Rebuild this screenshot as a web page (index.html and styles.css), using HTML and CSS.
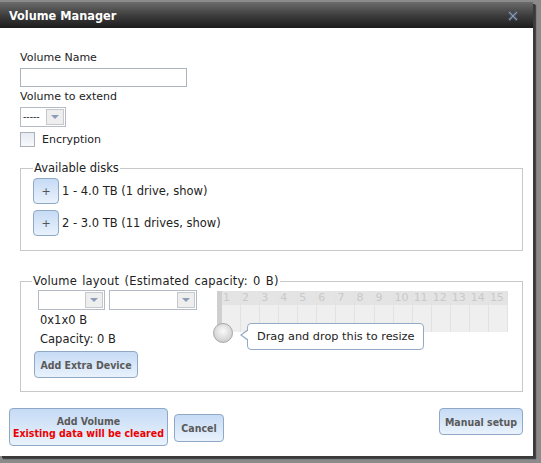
FILE: index.html
```html
<!DOCTYPE html>
<html>
<head>
<meta charset="utf-8">
<link rel="stylesheet" href="styles.css">
</head>
<body>
<div class="dialog">
  <div class="titlebar">
    <span class="title">Volume Manager</span>
    <svg class="close" width="10" height="10" viewBox="0 0 10 10"><path d="M1 1 L9 9 M9 1 L1 9" stroke="#56657a" stroke-width="2.6"/><path d="M1 1 L9 9 M9 1 L1 9" stroke="#8a9ab0" stroke-width="1"/></svg>
  </div>
  <div class="content">
    <div class="label l-name">Volume Name</div>
    <div class="textinput"></div>
    <div class="label l-extend">Volume to extend</div>
    <div class="select small"><span class="val">-----</span><span class="arrowbox"><span class="arrow"></span></span></div>
    <div class="checkrow"><span class="checkbox"></span><span class="label">Encryption</span></div>

    <fieldset class="fs disks">
      <legend>Available disks</legend>
      <div class="diskrow"><span class="btn plus">+</span><span>1 - 4.0 TB (1 drive, show)</span></div>
      <div class="diskrow"><span class="btn plus">+</span><span>2 - 3.0 TB (11 drives, show)</span></div>
    </fieldset>

    <fieldset class="fs layout">
      <legend>Volume layout (Estimated capacity: 0 B)</legend>
      <div class="layoutrow">
        <div class="leftcol">
          <div class="selects">
            <div class="select s1"><span class="val"></span><span class="arrowbox"><span class="arrow"></span></span></div>
            <div class="select s2"><span class="val"></span><span class="arrowbox"><span class="arrow"></span></span></div>
          </div>
          <div class="info i1">0x1x0 B</div>
          <div class="info i2">Capacity: 0 B</div>
          <span class="btn extra">Add Extra Device</span>
        </div>
        <div class="gridwrap">
          <div class="grid">
            <div class="col first"><span>1</span></div>
            <div class="col"><span>2</span></div>
            <div class="col"><span>3</span></div>
            <div class="col"><span>4</span></div>
            <div class="col"><span>5</span></div>
            <div class="col"><span>6</span></div>
            <div class="col"><span>7</span></div>
            <div class="col"><span>8</span></div>
            <div class="col"><span>9</span></div>
            <div class="col"><span>10</span></div>
            <div class="col"><span>11</span></div>
            <div class="col"><span>12</span></div>
            <div class="col"><span>13</span></div>
            <div class="col"><span>14</span></div>
            <div class="col"><span>15</span></div>
          </div>
          <div class="handle"></div>
          <div class="tip">Drag and drop this to resize</div>
        </div>
      </div>
    </fieldset>

    <div class="actions">
      <span class="btn addvol"><span class="b1">Add Volume</span><span class="warn">Existing data will be cleared</span></span>
      <span class="btn cancel">Cancel</span>
      <span class="spacer"></span>
      <span class="btn manual">Manual setup</span>
    </div>
  </div>
</div>
</body>
</html>
```
FILE: styles.css
```css
html, body {
  margin: 0;
  padding: 0;
  background: #8b8b8b;
  width: 541px;
  height: 463px;
  overflow: hidden;
}
body {
  font-family: "DejaVu Sans", Verdana, sans-serif;
  font-size: 11px;
  color: #222;
}
.dialog {
  margin-top: 2px;
  width: 533px;
  height: 454px;
  background: #fff;
  box-shadow: 2px 2px 0 #3a3a3a, 3px 3px 1px #444;
  display: flex;
  flex-direction: column;
}
.titlebar {
  height: 26px;
  background: linear-gradient(#6b6b6b, #3a3a3a 55%, #1c1c1c);
  display: flex;
  align-items: center;
  padding: 0 15px 0 9px;
  justify-content: space-between;
}
.title {
  color: #fff;
  font-family: "DejaVu Sans Condensed", "DejaVu Sans", sans-serif;
  font-weight: bold;
  font-size: 12.6px;
}
.close { margin-top: 1px; }
.content {
  padding: 0 10px 0 20px;
  display: flex;
  flex-direction: column;
  flex: 1;
}
.label { line-height: 14px; }
.l-name { margin-top: 23px; }
.textinput {
  margin-top: 3px;
  width: 165px;
  height: 17px;
  border: 1px solid #abb3bd;
}
.l-extend { margin-top: 3px; }
.select {
  margin-top: 3px;
  display: flex;
  height: 18px;
  border: 1px solid #b4bbc4;
  box-sizing: content-box;
}
.select.small { width: 44px; margin-top: 3px; }
.select .val {
  flex: 1;
  font-family: "Liberation Sans", sans-serif;
  font-size: 10px;
  line-height: 18px;
  padding-left: 2px;
  color: #333;
  letter-spacing: 0;
}
.arrowbox {
  width: 16px;
  margin: 1px;
  border: 1px solid #c5c9ce;
  background: #eeeeee;
  display: flex;
  align-items: center;
  justify-content: center;
}
.arrow {
  width: 0; height: 0;
  border-left: 4px solid transparent;
  border-right: 4px solid transparent;
  border-top: 4px solid #8c9cb6;
}
.checkrow {
  margin-top: 5px;
  display: flex;
  align-items: center;
  gap: 7px;
}
.checkbox {
  width: 13px;
  height: 13px;
  border: 1px solid #aab1ba;
  background: linear-gradient(#e6ebf2, #f7f9fb);
}
.fs {
  margin: 0;
  padding: 0;
  border: 1px solid #c8c8c8;
  box-sizing: content-box;
}
.fs legend {
  margin-left: 0;
  padding: 0 1px;
  line-height: 13px;
  font-size: 11.5px;
}
.disks {
  margin-top: 15px;
  height: 87px;
  padding: 0 0 0 12px;
  width: 489px;
}
.diskrow {
  display: flex;
  align-items: center;
  gap: 3px;
  height: 26px;
  font-size: 11.5px;
}
.disks .diskrow:first-of-type { margin-top: 3px; }
.diskrow + .diskrow { margin-top: 6px; }
.btn {
  display: inline-flex;
  align-items: center;
  justify-content: center;
  border: 1px solid #8ea8c6;
  border-radius: 4px;
  background: linear-gradient(#c6dbf5, #e9f2fc);
  color: #5a5a5a;
  font-family: "DejaVu Sans Condensed", "DejaVu Sans", sans-serif;
  font-weight: bold;
  box-sizing: border-box;
  font-size: 10.5px;
  white-space: nowrap;
}
.plus {
  width: 26px;
  height: 26px;
  font-family: "DejaVu Sans", sans-serif;
  font-weight: normal;
  font-size: 11px;
  color: #555;
}
.layout {
  margin-top: 24px;
  height: 115px;
  padding: 0 0 0 13px;
  width: 488px;
}
.layout legend { margin-left: -2px; word-spacing: 1.4px; letter-spacing: 0.2px; }
.layoutrow {
  display: flex;
  margin-top: 2px;
}
.leftcol {
  width: 184px;
  display: flex;
  flex-direction: column;
  align-items: flex-start;
}
.selects {
  display: flex;
  gap: 4px;
  margin-left: 4px;
}
.selects .select { margin-top: 0; height: 18px; }
.s1 { width: 65px; }
.s2 { width: 86px; }
.info { margin-left: 6px; font-size: 11.5px; line-height: 14px; }
.i1 { margin-top: 3px; }
.i2 { margin-top: 5px; }
.extra {
  margin-top: 5px;
  width: 104px;
  height: 27px;
}
.gridwrap {
  position: relative;
  margin-left: -1px;
  margin-top: 1px;
  width: 300px;
  height: 80px;
}
.grid {
  display: flex;
  width: 291px;
  height: 41px;
  background: #efefef;
}
.col {
  flex: 1;
  border-right: 1px solid #e2e2e2;
  background: linear-gradient(#e4e4e4 0, #e4e4e4 14px, #efefef 14px);
  color: #c9c9c9;
  font-size: 11px;
  line-height: 14px;
  padding-left: 1px;
}
.col.first {
  border-left: 5px solid #cfcfcf;
}
.handle {
  position: absolute;
  left: -4px;
  top: 32px;
  width: 18px;
  height: 18px;
  border-radius: 50%;
  border: 1px solid #a8a8a8;
  background: radial-gradient(circle at 50% 40%, #fafafa, #d8d8d8 60%, #bdbdbd);
}
.tip {
  position: absolute;
  left: 30px;
  top: 32px;
  height: 25px;
  padding: 0 8px 0 9px;
  border: 1px solid #94aac4;
  border-radius: 4px;
  background: #fff;
  line-height: 25px;
  font-size: 11.3px;
  color: #222;
  white-space: nowrap;
}
.tip::before {
  content: "";
  position: absolute;
  left: -8px;
  top: 5px;
  width: 0; height: 0;
  border-top: 6px solid transparent;
  border-bottom: 6px solid transparent;
  border-right: 8px solid #94aac4;
}
.tip::after {
  content: "";
  position: absolute;
  left: -6px;
  top: 6px;
  width: 0; height: 0;
  border-top: 5px solid transparent;
  border-bottom: 5px solid transparent;
  border-right: 7px solid #fff;
}
.actions {
  display: flex;
  align-items: flex-start;
  margin-left: -11px;
  margin-top: 16px;
}
.addvol {
  width: 159px;
  height: 38px;
  flex-direction: column;
  line-height: 12px;
}
.b1 { color: #5a5a5a; }
.warn { color: #ee0000; }
.cancel {
  margin-left: 6px;
  margin-top: 6px;
  width: 50px;
  height: 28px;
}
.spacer { flex: 1; }
.manual {
  width: 84px;
  height: 27px;
}
```
